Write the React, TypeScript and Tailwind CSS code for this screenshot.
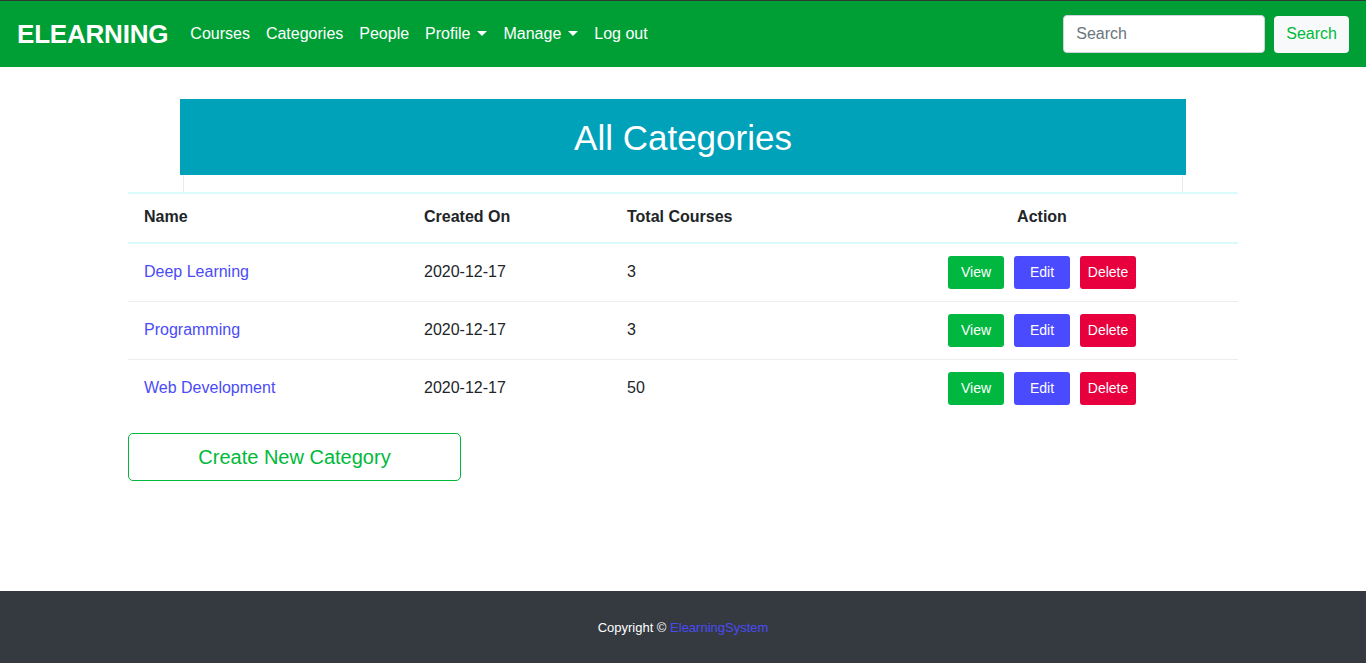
import React from 'react';

const ROWS = [
  { name: 'Deep Learning', created: '2020-12-17', total: '3' },
  { name: 'Programming', created: '2020-12-17', total: '3' },
  { name: 'Web Development', created: '2020-12-17', total: '50' },
];

function Caret() {
  return <span className="ml-[7px] inline-block h-0 w-0 border-x-[5px] border-t-[5px] border-x-transparent border-t-white align-[3px]" />;
}

export default function App() {
  return (
    <div className="flex min-h-screen flex-col bg-white text-[#212529]" style={{ fontFamily: '"Liberation Sans", Arial, sans-serif' }}>
      {/* Navbar */}
      <nav className="flex h-[67px] items-center border-t border-[#2f3a33] bg-[#009f36] pl-[17px] pr-[17px]">
        <span className="mr-[22px] text-[26px] font-bold leading-none tracking-[-0.2px] text-white">ELEARNING</span>
        <div className="flex items-center gap-[16px] text-[16px] text-white">
          <a>Courses</a>
          <a>Categories</a>
          <a>People</a>
          <a>Profile<Caret /></a>
          <a>Manage<Caret /></a>
          <a>Log out</a>
        </div>
        <div className="ml-auto flex items-center gap-[9px]">
          <input
            placeholder="Search"
            className="h-[38px] w-[202px] rounded-[4px] border border-[#ced4da] bg-white px-3 text-[16px] text-[#495057] placeholder:text-[#6c757d]"
          />
          <button className="h-[37px] rounded-[4px] bg-[#f8f9fa] px-3 text-[16px] text-[#00b93a]">Search</button>
        </div>
      </nav>

      {/* Main */}
      <main className="mx-auto w-[1110px] flex-1 pt-[32px]">
        <div className="mx-[52px]">
          <div className="flex h-[76px] items-center justify-center bg-[#00a2ba]">
            <h1 className="text-[35px] leading-none text-white">All Categories</h1>
          </div>
          <div className="mx-[3px] h-[17px] border-x border-[#e9ecef]" />
        </div>

        <table className="w-full border-collapse text-left text-[16px]">
          <thead>
            <tr className="h-[50px] border-t-2 border-b-2 border-t-[#dcfcfc] border-b-[#dcfafa]">
              <th className="w-[280px] px-4 pb-[2px] font-bold">Name</th>
              <th className="w-[203px] px-4 pb-[2px] font-bold">Created On</th>
              <th className="w-[235px] px-4 pb-[2px] font-bold">Total Courses</th>
              <th className="px-4 pb-[2px] text-center font-bold">Action</th>
            </tr>
          </thead>
          <tbody>
            {ROWS.map((r, i) => (
              <tr key={r.name} className={`h-[58px] ${i < ROWS.length - 1 ? 'border-b border-[#eeeeee]' : ''}`}>
                <td className="px-4 text-[#4b4bf5]">{r.name}</td>
                <td className="px-4">{r.created}</td>
                <td className="px-4">{r.total}</td>
                <td className="px-4">
                  <div className="flex justify-center gap-[10px] text-[14px] text-white">
                    <button className="h-[33px] w-[56px] rounded-[3px] bg-[#00b83f]">View</button>
                    <button className="h-[33px] w-[56px] rounded-[3px] bg-[#4a4aff]">Edit</button>
                    <button className="h-[33px] w-[56px] rounded-[3px] bg-[#e8003e]">Delete</button>
                  </div>
                </td>
              </tr>
            ))}
          </tbody>
        </table>

        <button className="mt-[16px] h-[48px] w-[333px] rounded-[5px] border border-[#00b93a] text-[20px] text-[#00b93a]">
          Create New Category
        </button>
      </main>

      {/* Footer */}
      <footer className="flex h-[72px] items-center justify-center bg-[#343a40] pt-[2px] text-[13px] text-white">
        Copyright ©&nbsp;<span className="text-[#4b4bf5]">ElearningSystem</span>
      </footer>
    </div>
  );
}
